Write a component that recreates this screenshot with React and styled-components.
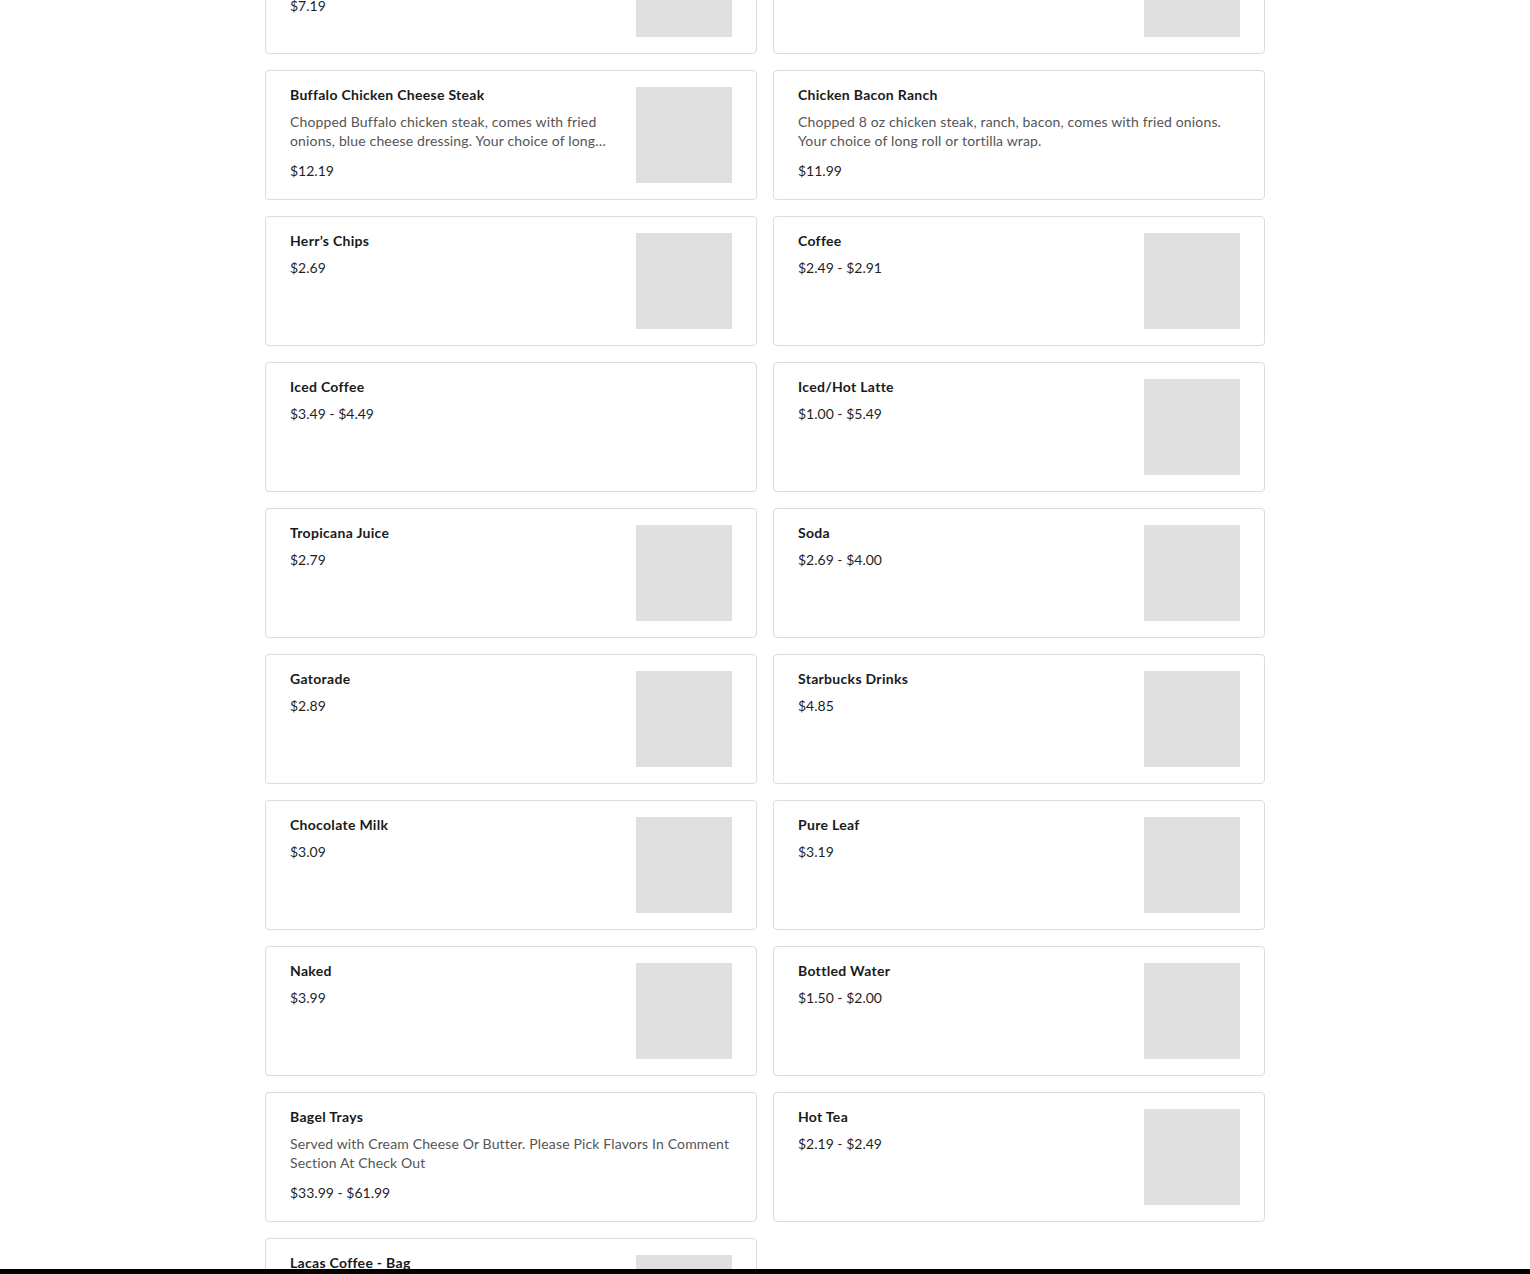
import styled, { createGlobalStyle } from 'styled-components';

const GlobalStyle = createGlobalStyle`
    body {
        margin: 0;
        background: #fff;
        font-family: Lato, "Liberation Sans", sans-serif;
        color: #1f1f1f;
        overflow: hidden;
    }
`;

const Page = styled.div`
    width: 1000px;
    margin: -76px auto 0;
    display: grid;
    grid-template-columns: 1fr 1fr;
    gap: 16px;
`;

const Card = styled.div`
    height: 130px;
    box-sizing: border-box;
    border: 1px solid #dcdcdc;
    border-radius: 4px;
    padding: 16px 24px;
    display: flex;
    gap: 24px;
    background: #fff;
`;

const Info = styled.div`
    flex: 1;
    min-width: 0;
`;

const Title = styled.div`
    font-size: 14px;
    font-weight: 700;
    line-height: 15px;
    letter-spacing: 0.3px;
    margin-bottom: 10px;
    color: #1a1a1a;
`;

const Desc = styled.div`
    font-size: 14px;
    line-height: 19px;
    letter-spacing: 0.15px;
    color: #555;
    margin-bottom: 11px;
    display: -webkit-box;
    -webkit-line-clamp: 2;
    -webkit-box-orient: vertical;
    overflow: hidden;
`;

const Price = styled.div`
    font-size: 14px;
    line-height: 20px;
    color: #1f1f1f;
`;

const Thumb = styled.div`
    width: 96px;
    height: 96px;
    flex-shrink: 0;
    background: #e0e0e0;
`;

const BottomBar = styled.div`
    position: fixed;
    left: 0;
    right: 0;
    bottom: 0;
    height: 5px;
    background: #000;
`;

const items = [
    { name: 'Cheese Steak', desc: 'Chopped 8 oz steak, comes with fried onions.', price: '$7.19', img: true },
    { name: 'Chicken Cheese Steak', price: '$7.19', img: true },
    {
        name: 'Buffalo Chicken Cheese Steak',
        desc: 'Chopped Buffalo chicken steak, comes with fried onions, blue cheese dressing. Your choice of long roll or tortilla wrap.',
        price: '$12.19',
        img: true,
    },
    {
        name: 'Chicken Bacon Ranch',
        desc: 'Chopped 8 oz chicken steak, ranch, bacon, comes with fried onions. Your choice of long roll or tortilla wrap.',
        price: '$11.99',
    },
    { name: 'Herr\u2019s Chips', price: '$2.69', img: true },
    { name: 'Coffee', price: '$2.49 - $2.91', img: true },
    { name: 'Iced Coffee', price: '$3.49 - $4.49' },
    { name: 'Iced/Hot Latte', price: '$1.00 - $5.49', img: true },
    { name: 'Tropicana Juice', price: '$2.79', img: true },
    { name: 'Soda', price: '$2.69 - $4.00', img: true },
    { name: 'Gatorade', price: '$2.89', img: true },
    { name: 'Starbucks Drinks', price: '$4.85', img: true },
    { name: 'Chocolate Milk', price: '$3.09', img: true },
    { name: 'Pure Leaf', price: '$3.19', img: true },
    { name: 'Naked', price: '$3.99', img: true },
    { name: 'Bottled Water', price: '$1.50 - $2.00', img: true },
    {
        name: 'Bagel Trays',
        desc: 'Served with Cream Cheese Or Butter. Please Pick Flavors In Comment Section At Check Out',
        price: '$33.99 - $61.99',
    },
    { name: 'Hot Tea', price: '$2.19 - $2.49', img: true },
    { name: 'Lacas Coffee - Bag', price: '$14.99', img: true },
];

const App = () => (
    <>
        <GlobalStyle />
        <Page>
            {items.map(item => (
                <Card key={item.name}>
                    <Info>
                        <Title>{item.name}</Title>
                        {item.desc && <Desc>{item.desc}</Desc>}
                        <Price>{item.price}</Price>
                    </Info>
                    {item.img && <Thumb />}
                </Card>
            ))}
        </Page>
        <BottomBar />
    </>
);

export default App;
